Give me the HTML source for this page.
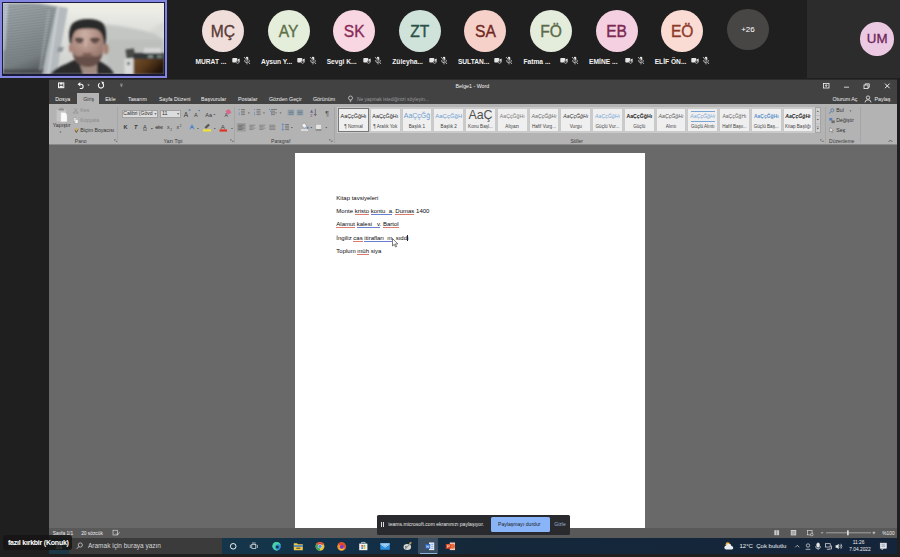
<!DOCTYPE html>
<html lang="tr"><head><meta charset="utf-8"><title>Toplantı</title>
<style>
*{margin:0;padding:0;box-sizing:border-box}
html,body{width:900px;height:557px;overflow:hidden;background:#201f1f;font-family:"Liberation Sans",sans-serif}
.a{position:absolute}
.t{position:absolute;white-space:nowrap;line-height:1}
.av{position:absolute;width:42px;height:42px;border-radius:50%;top:10.3px;text-align:center;font-size:15.6px;line-height:44.6px;-webkit-text-stroke:0.35px currentColor}
.lb{position:absolute;top:56.6px;height:9px;white-space:nowrap;color:#f2f2f2;font-size:6.65px;font-weight:bold;line-height:9px}
.ic{position:absolute;top:56.2px;width:8px;height:9px}
#ws{position:absolute;left:49px;top:79px;width:848.3px;height:474.6px;background:#696969;overflow:hidden}
.tab{position:absolute;top:16.5px;color:#f0f0f0;font-size:5.3px;line-height:7px;white-space:nowrap}
.rl{position:absolute;top:58.6px;color:#3a3a3a;font-size:5px;line-height:6px;white-space:nowrap;transform:translateX(-50%)}
.sty{position:absolute;top:30px;width:28.7px;height:21.5px;background:#efefef}
.sty span{position:absolute;left:-5.65px;width:40px;text-align:center;white-space:nowrap}
.sty .p{top:6px;font-size:5.4px;line-height:8px;color:#222}
.sty .n{top:15.2px;font-size:4.6px;line-height:6px;color:#444}
.dl{position:absolute;left:287px;font-size:6px;line-height:8px;color:#0a0a0a;white-space:nowrap}
.dl u{text-decoration:none;border-bottom:0.5px solid #dc7a70}
.dl u.b{border-bottom:0.5px solid #6a7fd0}
</style></head><body>
<div class="a" style="left:807px;top:0;width:93px;height:78px;background:#2d2c2c"></div>
<div class="a" style="left:860.4px;top:22.2px;width:33.6px;height:33.6px;border-radius:50%;background:#ecc9e3;color:#6a2458;font-size:13.3px;line-height:34.6px;text-align:center;-webkit-text-stroke:0.3px #6a2458">UM</div>
<div class="av" style="left:202.0px;background:#f0dedb;color:#5a3a36">MÇ</div>
<div class="lb" style="left:195.5px">MURAT ...</div><svg class="ic" style="left:231.7px" viewBox="0 0 8 9"><rect x="0.3" y="2" width="5" height="4.6" rx="0.8" fill="#e6e6e6"/><path d="M5.6 3.6 L7.6 2.4 V6.4 L5.6 5.2Z" fill="#e6e6e6"/><circle cx="5.6" cy="6.2" r="1.7" fill="#201f1f"/><circle cx="5.6" cy="6.2" r="1.2" fill="none" stroke="#e6e6e6" stroke-width="0.6"/></svg><svg class="ic" style="left:243.0px" viewBox="0 0 8 9"><rect x="2.7" y="0.8" width="2.6" height="4.6" rx="1.3" fill="#e6e6e6"/><path d="M1.5 4.2 a2.5 2.5 0 0 0 5 0 M4 6.8 V8.4" stroke="#e6e6e6" stroke-width="0.7" fill="none"/><path d="M0.8 0.8 L7.2 8.2" stroke="#201f1f" stroke-width="1.6"/><path d="M1 1 L7 8" stroke="#e6e6e6" stroke-width="0.7"/></svg>
<div class="av" style="left:267.6px;background:#e4eedb;color:#5c7046">AY</div>
<div class="lb" style="left:261.1px">Aysun Y...</div><svg class="ic" style="left:297.3px" viewBox="0 0 8 9"><rect x="0.3" y="2" width="5" height="4.6" rx="0.8" fill="#e6e6e6"/><path d="M5.6 3.6 L7.6 2.4 V6.4 L5.6 5.2Z" fill="#e6e6e6"/><circle cx="5.6" cy="6.2" r="1.7" fill="#201f1f"/><circle cx="5.6" cy="6.2" r="1.2" fill="none" stroke="#e6e6e6" stroke-width="0.6"/></svg><svg class="ic" style="left:308.6px" viewBox="0 0 8 9"><rect x="2.7" y="0.8" width="2.6" height="4.6" rx="1.3" fill="#e6e6e6"/><path d="M1.5 4.2 a2.5 2.5 0 0 0 5 0 M4 6.8 V8.4" stroke="#e6e6e6" stroke-width="0.7" fill="none"/><path d="M0.8 0.8 L7.2 8.2" stroke="#201f1f" stroke-width="1.6"/><path d="M1 1 L7 8" stroke="#e6e6e6" stroke-width="0.7"/></svg>
<div class="av" style="left:333.2px;background:#f8d6e2;color:#8a2c58">SK</div>
<div class="lb" style="left:326.7px">Sevgi K...</div><svg class="ic" style="left:362.9px" viewBox="0 0 8 9"><rect x="0.3" y="2" width="5" height="4.6" rx="0.8" fill="#e6e6e6"/><path d="M5.6 3.6 L7.6 2.4 V6.4 L5.6 5.2Z" fill="#e6e6e6"/><circle cx="5.6" cy="6.2" r="1.7" fill="#201f1f"/><circle cx="5.6" cy="6.2" r="1.2" fill="none" stroke="#e6e6e6" stroke-width="0.6"/></svg><svg class="ic" style="left:374.2px" viewBox="0 0 8 9"><rect x="2.7" y="0.8" width="2.6" height="4.6" rx="1.3" fill="#e6e6e6"/><path d="M1.5 4.2 a2.5 2.5 0 0 0 5 0 M4 6.8 V8.4" stroke="#e6e6e6" stroke-width="0.7" fill="none"/><path d="M0.8 0.8 L7.2 8.2" stroke="#201f1f" stroke-width="1.6"/><path d="M1 1 L7 8" stroke="#e6e6e6" stroke-width="0.7"/></svg>
<div class="av" style="left:398.8px;background:#cfe3db;color:#2b5146">ZT</div>
<div class="lb" style="left:392.3px">Züleyha...</div><svg class="ic" style="left:428.5px" viewBox="0 0 8 9"><rect x="0.3" y="2" width="5" height="4.6" rx="0.8" fill="#e6e6e6"/><path d="M5.6 3.6 L7.6 2.4 V6.4 L5.6 5.2Z" fill="#e6e6e6"/><circle cx="5.6" cy="6.2" r="1.7" fill="#201f1f"/><circle cx="5.6" cy="6.2" r="1.2" fill="none" stroke="#e6e6e6" stroke-width="0.6"/></svg><svg class="ic" style="left:439.8px" viewBox="0 0 8 9"><rect x="2.7" y="0.8" width="2.6" height="4.6" rx="1.3" fill="#e6e6e6"/><path d="M1.5 4.2 a2.5 2.5 0 0 0 5 0 M4 6.8 V8.4" stroke="#e6e6e6" stroke-width="0.7" fill="none"/><path d="M0.8 0.8 L7.2 8.2" stroke="#201f1f" stroke-width="1.6"/><path d="M1 1 L7 8" stroke="#e6e6e6" stroke-width="0.7"/></svg>
<div class="av" style="left:464.4px;background:#f6d1c9;color:#70281f">SA</div>
<div class="lb" style="left:457.9px">SULTAN...</div><svg class="ic" style="left:494.1px" viewBox="0 0 8 9"><rect x="0.3" y="2" width="5" height="4.6" rx="0.8" fill="#e6e6e6"/><path d="M5.6 3.6 L7.6 2.4 V6.4 L5.6 5.2Z" fill="#e6e6e6"/><circle cx="5.6" cy="6.2" r="1.7" fill="#201f1f"/><circle cx="5.6" cy="6.2" r="1.2" fill="none" stroke="#e6e6e6" stroke-width="0.6"/></svg><svg class="ic" style="left:505.4px" viewBox="0 0 8 9"><rect x="2.7" y="0.8" width="2.6" height="4.6" rx="1.3" fill="#e6e6e6"/><path d="M1.5 4.2 a2.5 2.5 0 0 0 5 0 M4 6.8 V8.4" stroke="#e6e6e6" stroke-width="0.7" fill="none"/><path d="M0.8 0.8 L7.2 8.2" stroke="#201f1f" stroke-width="1.6"/><path d="M1 1 L7 8" stroke="#e6e6e6" stroke-width="0.7"/></svg>
<div class="av" style="left:530.0px;background:#e4ecdc;color:#5b6b48">FÖ</div>
<div class="lb" style="left:523.5px">Fatma ...</div><svg class="ic" style="left:559.7px" viewBox="0 0 8 9"><rect x="0.3" y="2" width="5" height="4.6" rx="0.8" fill="#e6e6e6"/><path d="M5.6 3.6 L7.6 2.4 V6.4 L5.6 5.2Z" fill="#e6e6e6"/><circle cx="5.6" cy="6.2" r="1.7" fill="#201f1f"/><circle cx="5.6" cy="6.2" r="1.2" fill="none" stroke="#e6e6e6" stroke-width="0.6"/></svg><svg class="ic" style="left:571.0px" viewBox="0 0 8 9"><rect x="2.7" y="0.8" width="2.6" height="4.6" rx="1.3" fill="#e6e6e6"/><path d="M1.5 4.2 a2.5 2.5 0 0 0 5 0 M4 6.8 V8.4" stroke="#e6e6e6" stroke-width="0.7" fill="none"/><path d="M0.8 0.8 L7.2 8.2" stroke="#201f1f" stroke-width="1.6"/><path d="M1 1 L7 8" stroke="#e6e6e6" stroke-width="0.7"/></svg>
<div class="av" style="left:595.6px;background:#f4d0e0;color:#7c2850">EB</div>
<div class="lb" style="left:589.1px">EMİNE ...</div><svg class="ic" style="left:625.3px" viewBox="0 0 8 9"><rect x="0.3" y="2" width="5" height="4.6" rx="0.8" fill="#e6e6e6"/><path d="M5.6 3.6 L7.6 2.4 V6.4 L5.6 5.2Z" fill="#e6e6e6"/><circle cx="5.6" cy="6.2" r="1.7" fill="#201f1f"/><circle cx="5.6" cy="6.2" r="1.2" fill="none" stroke="#e6e6e6" stroke-width="0.6"/></svg><svg class="ic" style="left:636.6px" viewBox="0 0 8 9"><rect x="2.7" y="0.8" width="2.6" height="4.6" rx="1.3" fill="#e6e6e6"/><path d="M1.5 4.2 a2.5 2.5 0 0 0 5 0 M4 6.8 V8.4" stroke="#e6e6e6" stroke-width="0.7" fill="none"/><path d="M0.8 0.8 L7.2 8.2" stroke="#201f1f" stroke-width="1.6"/><path d="M1 1 L7 8" stroke="#e6e6e6" stroke-width="0.7"/></svg>
<div class="av" style="left:661.2px;background:#fadcd4;color:#8c3a2a">EÖ</div>
<div class="lb" style="left:654.7px">ELİF ÖN...</div><svg class="ic" style="left:690.9px" viewBox="0 0 8 9"><rect x="0.3" y="2" width="5" height="4.6" rx="0.8" fill="#e6e6e6"/><path d="M5.6 3.6 L7.6 2.4 V6.4 L5.6 5.2Z" fill="#e6e6e6"/><circle cx="5.6" cy="6.2" r="1.7" fill="#201f1f"/><circle cx="5.6" cy="6.2" r="1.2" fill="none" stroke="#e6e6e6" stroke-width="0.6"/></svg><svg class="ic" style="left:702.2px" viewBox="0 0 8 9"><rect x="2.7" y="0.8" width="2.6" height="4.6" rx="1.3" fill="#e6e6e6"/><path d="M1.5 4.2 a2.5 2.5 0 0 0 5 0 M4 6.8 V8.4" stroke="#e6e6e6" stroke-width="0.7" fill="none"/><path d="M0.8 0.8 L7.2 8.2" stroke="#201f1f" stroke-width="1.6"/><path d="M1 1 L7 8" stroke="#e6e6e6" stroke-width="0.7"/></svg>
<div class="av" style="left:727.2px;top:8.7px;width:41.6px;height:41.6px;background:#484644;color:#fff;font-size:8px;line-height:41px;-webkit-text-stroke:0">+26</div>
<div class="a" style="left:0;top:0;width:167.2px;height:77.6px;background:#8286e0"></div>
<div class="a" style="left:2px;top:2px;width:163px;height:73.5px;background:#1b1a3c"></div>
<svg class="a" style="left:3px;top:3px" width="161" height="70.5" viewBox="3 3 161 70.5">
<defs>
<filter id="bl" x="-10%" y="-10%" width="120%" height="120%"><feGaussianBlur stdDeviation="0.8"/></filter>
<filter id="bl2" x="-10%" y="-10%" width="120%" height="120%"><feGaussianBlur stdDeviation="1.6"/></filter>
<linearGradient id="wall" x1="0" y1="0" x2="0" y2="1"><stop offset="0" stop-color="#efeee2"/><stop offset="0.12" stop-color="#ecece6"/><stop offset="0.3" stop-color="#e2e3df"/><stop offset="1" stop-color="#cfd1cd"/></linearGradient>
<linearGradient id="bld" x1="0" y1="0" x2="0.3" y2="1"><stop offset="0" stop-color="#9ea6aa"/><stop offset="0.45" stop-color="#8b9397"/><stop offset="0.85" stop-color="#788084"/><stop offset="1" stop-color="#5d6366"/></linearGradient>
<radialGradient id="skin" cx="0.42" cy="0.25" r="0.8"><stop offset="0" stop-color="#ccb0a5"/><stop offset="0.45" stop-color="#b39186"/><stop offset="1" stop-color="#8a6a60"/></radialGradient>
<pattern id="slat" width="4" height="1.6" patternUnits="userSpaceOnUse" patternTransform="rotate(4)"><rect width="4" height="0.6" fill="#5f676b" opacity="0.45"/></pattern>
<linearGradient id="cab" x1="0" y1="0" x2="1" y2="0.6"><stop offset="0" stop-color="#74502b"/><stop offset="0.5" stop-color="#5a3a1c"/><stop offset="1" stop-color="#1e1208"/></linearGradient>
</defs>
<rect x="3" y="3" width="161" height="70.5" fill="url(#wall)"/>
<g filter="url(#bl2)">
<path d="M100 24 Q130 26 164 36 V74 H100Z" fill="#c3c6c3"/>
<path d="M150 30 L164 22 V40Z" fill="#d6d8d4"/>
<path d="M108 40 H164 V74 H108Z" fill="#bcbfbc"/>
</g>
<g filter="url(#bl)">
<!-- window frame + blinds -->
<path d="M3 3 H40 L68 8 L61 46 L57 74 H3Z" fill="#b4babd"/><path d="M57.5 7 L59 7.3 L49 74 L47.5 74Z" fill="#d5dadc"/>
<path d="M3 3 H33 L57 7 L47 50 L42 74 H3Z" fill="url(#bld)"/>
<path d="M5 4 L8 4 L5 50 L4 50Z" fill="#c9d4e6" opacity="0.8"/>
<path d="M58 47 L64 47 L62 52 L57 52Z" fill="#8e9497"/>
<path d="M3 69 H44 L43 74 H3Z" fill="#3d4143" opacity="0.6"/><path d="M48 10 L50 10.300 L41 70 L39.500 70Z" fill="#aab2b6" opacity="0.8"/>
<!-- cabinet -->
<rect x="124.5" y="59" width="9.5" height="15" fill="#d9dbd8"/>
<rect x="126" y="49" width="8.5" height="9" fill="#474c46" transform="rotate(-8 130 53)"/>
<rect x="133.5" y="56.5" width="31" height="18" fill="url(#cab)"/>
<rect x="133.5" y="53" width="31" height="6" fill="#34383a"/>
<rect x="144" y="48" width="17" height="5" fill="#d6d6d6"/>
<rect x="148" y="55" width="5" height="3" fill="#7d8a86"/>
<rect x="157" y="55" width="5" height="3" fill="#6d7a76"/>
<rect x="127" y="62" width="3" height="3" fill="#6a6d6a"/>
<!-- man -->
<path d="M50 74 Q55 68 66 64 L74 60 L98 60 L106 65 Q112 69 114 74Z" fill="#2a2c2a"/>
<path d="M79 62 H97 V74 H83Z" fill="#a08a80"/>
<ellipse cx="106" cy="49" rx="2.6" ry="5.5" fill="#a57d70"/>
<ellipse cx="70.5" cy="48" rx="1.6" ry="4.5" fill="#a88274"/>
<path d="M71 34 Q71 24 88 24 Q104 24 104 36 L103 52 Q101 62 95 65 Q88 68 81 65 Q74 61 72 52Z" fill="url(#skin)"/>
<path d="M72.5 53 Q75 57 80 56.5 Q87 54 95 56.5 Q100 57 102.800 52 Q101 62 95 65.500 Q88 68.500 81 65.500 Q74 62 72.500 53Z" fill="#66504a"/>
<path d="M81 55.500 Q87 53.600 94 55.500 L93 57.200 Q87 56 82 57.200Z" fill="#7a5f57"/>
<path d="M69.800 43 Q67.500 30 72 24 Q77 19 88 19 Q99 19 103.500 24 Q107.500 30 105.500 44 L103.800 45 Q104 33 97 29.500 Q87 27.500 77.500 29.800 Q72 32 71.800 44Z" fill="#2a2b2b"/>
<path d="M75 38.600 Q79 37 83.500 38.800 L83.500 40.800 Q79 39.600 75 40.800Z" fill="#3a2e2c"/>
<path d="M90 38.800 Q95 37 99.500 38.600 L99.500 40.800 Q95 39.600 90 40.800Z" fill="#3a2e2c"/>
<ellipse cx="79.500" cy="42" rx="3.200" ry="1.300" fill="#54413c"/>
<ellipse cx="94.800" cy="42" rx="3.200" ry="1.300" fill="#54413c"/>
<path d="M86 40 L85.500 47.500" stroke="#d4b9ae" stroke-width="1.800" fill="none" opacity="0.8"/><path d="M83 53.300 Q87 54.300 91.500 53.300" stroke="#6e4d45" stroke-width="1.200" fill="none"/>
</g>
<path d="M6 5 H33 L55 8.500 L46 50 L42 68 H6Z" fill="url(#slat)" opacity="0.55"/>
</svg>
<div id="ws">
<div class="a" style="left:0;top:0;width:849px;height:25px;background:#424243"></div><div class="a" style="left:0;top:0;width:849px;height:0.6px;background:#2c2c2c"></div>
<svg class="a" style="left:0;top:0" width="120" height="14" viewBox="0 0 120 14">
<g fill="none" stroke="#f4f4f4" stroke-width="1">
<rect x="9.500" y="3.900" width="5.300" height="4.800"/><rect x="10.800" y="3.900" width="2.700" height="1.700" fill="#f4f4f4" stroke="none"/><rect x="10.600" y="6.800" width="3.100" height="1.900" fill="#f4f4f4" stroke="none"/>
<path d="M29.500 5.300 H32 A2.100 2.100 0 0 1 32 9.500 H30.800" stroke-width="1.100"/><path d="M31.300 3 L28.600 5.300 L31.300 7.600Z" fill="#f4f4f4" stroke="none"/>
<path d="M53.300 4.300 A2.600 2.600 0 1 1 50.700 4.300" stroke-width="1.100"/><path d="M52 2.600 L54.900 2.900 L54.300 5.800Z" fill="#f4f4f4" stroke="none"/>
</g>
<path d="M38.300 5.600 h2.400 l-1.200 1.400z" fill="#ccc"/>
<path d="M71.200 6.400 h2.400 l-1.200 1.400z" fill="#ddd"/><rect x="71.200" y="4.800" width="2.400" height="0.600" fill="#ddd"/>
</svg>
<div class="t" style="left:406.5px;top:4.6px;color:#f2f2f2;font-size:5.3px">Belge1 - Word</div>
<svg class="a" style="left:771.0px;top:0" width="77" height="14" viewBox="820 79 77 14">
<g fill="none" stroke="#f2f2f2" stroke-width="0.8">
<rect x="823.500" y="83.500" width="5.500" height="4.500"/><path d="M826.200 87 V84.800 M825.200 85.800 L826.200 84.700 L827.200 85.800"/>
<path d="M844 87.200 H849"/>
<rect x="864" y="85" width="4" height="3.600"/><path d="M865.300 85 V83.800 H869.300 V87.300 H868"/>
<path d="M885 83.600 L889.600 88.200 M889.600 83.600 L885 88.200" stroke-width="1"/>
</g></svg>
<div class="a" style="left:28.3px;top:14.0px;width:22px;height:12px;background:#b3b3b3"></div>
<div class="tab" style="left:6.3px;color:#f4f4f4">Dosya</div>
<div class="tab" style="left:34.2px;color:#3a3a3a">Giriş</div>
<div class="tab" style="left:56.3px;color:#f0f0f0">Ekle</div>
<div class="tab" style="left:79.0px;color:#f0f0f0">Tasarım</div>
<div class="tab" style="left:110.0px;color:#f0f0f0">Sayfa Düzeni</div>
<div class="tab" style="left:152.0px;color:#f0f0f0">Başvurular</div>
<div class="tab" style="left:189.0px;color:#f0f0f0">Postalar</div>
<div class="tab" style="left:220.0px;color:#f0f0f0">Gözden Geçir</div>
<div class="tab" style="left:264.0px;color:#f0f0f0">Görünüm</div>
<div class="tab" style="left:308.0px;color:#9a9a9a;font-size:4.900px">Ne yapmak istediğinizi söyleyin...</div>
<svg class="a" style="left:298.0px;top:15.5px" width="7" height="8" viewBox="0 0 7 8"><circle cx="3.500" cy="3" r="2" fill="none" stroke="#ddd" stroke-width="0.700"/><path d="M2.700 5.600 H4.300 M2.900 6.700 H4.100" stroke="#ddd" stroke-width="0.700"/></svg>
<div class="tab" style="left:783.5px;color:#f0f0f0">Oturum Aç</div>
<div class="tab" style="left:825.5px;color:#f0f0f0">Paylaş</div>
<svg class="a" style="left:815.0px;top:15.5px" width="8" height="8" viewBox="0 0 8 8"><circle cx="4" cy="2.600" r="1.700" fill="none" stroke="#f0f0f0" stroke-width="0.800"/><path d="M1 7.500 Q1 4.800 4 4.800 Q7 4.800 7 7.500" fill="none" stroke="#f0f0f0" stroke-width="0.800"/></svg>
<div class="a" style="left:0;top:25.0px;width:848px;height:40.300px;background:#b3b3b3"></div>
<div class="a" style="left:0;top:65.3px;width:848px;height:0.8px;background:#8a8a8a"></div>
<div class="a" style="left:68.3px;top:28.0px;width:0.6px;height:36px;background:#a6a6a6"></div>
<div class="a" style="left:185.0px;top:28.0px;width:0.6px;height:36px;background:#a6a6a6"></div>
<div class="a" style="left:284.5px;top:28.0px;width:0.6px;height:36px;background:#a6a6a6"></div>
<div class="a" style="left:776.0px;top:28.0px;width:0.6px;height:36px;background:#a6a6a6"></div>
<div class="a" style="left:811.3px;top:28.0px;width:0.6px;height:36px;background:#a6a6a6"></div>
<div class="rl" style="left:31.7px">Pano</div>
<div class="rl" style="left:124.0px">Yazı Tipi</div>
<div class="rl" style="left:231.7px">Paragraf</div>
<div class="rl" style="left:527.7px">Stiller</div>
<div class="rl" style="left:792.7px">Düzenleme</div>
<svg class="a" style="left:64.5px;top:59.7px" width="3.5" height="3.5" viewBox="0 0 3.500 3.500"><path d="M0.300 0.300 H1.800 M0.300 0.300 V1.800 M3.200 1.400 V3.200 H1.400 M1.600 1.600 L3 3" stroke="#555" stroke-width="0.500" fill="none"/></svg>
<svg class="a" style="left:181.1px;top:59.7px" width="3.5" height="3.5" viewBox="0 0 3.500 3.500"><path d="M0.300 0.300 H1.800 M0.300 0.300 V1.800 M3.200 1.400 V3.200 H1.400 M1.600 1.600 L3 3" stroke="#555" stroke-width="0.500" fill="none"/></svg>
<svg class="a" style="left:280.3px;top:59.7px" width="3.5" height="3.5" viewBox="0 0 3.500 3.500"><path d="M0.300 0.300 H1.800 M0.300 0.300 V1.800 M3.200 1.400 V3.200 H1.400 M1.600 1.600 L3 3" stroke="#555" stroke-width="0.500" fill="none"/></svg>
<svg class="a" style="left:771.1px;top:59.7px" width="3.5" height="3.5" viewBox="0 0 3.500 3.500"><path d="M0.300 0.300 H1.800 M0.300 0.300 V1.800 M3.200 1.400 V3.200 H1.400 M1.600 1.600 L3 3" stroke="#555" stroke-width="0.500" fill="none"/></svg>
<svg class="a" style="left:838.5px;top:60.0px" width="5" height="4" viewBox="0 0 5 4"><path d="M0.600 3 L2.500 1 L4.400 3" stroke="#444" stroke-width="0.700" fill="none"/></svg>
<svg class="a" style="left:4.0px;top:26.0px" width="64" height="34" viewBox="53 105 64 34">
<rect x="56.600" y="109.600" width="9.500" height="11.800" rx="0.600" fill="#c4c4c4"/><path d="M58.500 108.800 h5.500 v1.600 h-5.500z" fill="#8d8d8d"/><rect x="59.800" y="107.800" width="2.800" height="1.400" fill="#9a9a9a"/>
<path d="M60.800 112.500 h4.200 l2 2 v7.300 h-6.200z" fill="#fafafa" stroke="#d0d0d0" stroke-width="0.400"/>
<path d="M59.300 131.600 h2.200 l-1.100 1.300z" fill="#666"/>
<path d="M74 108.300 L77.300 112.300 M77.300 108.300 L74 112.300" stroke="#8c8c8c" stroke-width="0.700"/><circle cx="74.200" cy="112.700" r="0.900" fill="none" stroke="#8c8c8c" stroke-width="0.500"/><circle cx="77.100" cy="112.700" r="0.900" fill="none" stroke="#8c8c8c" stroke-width="0.500"/>
<rect x="73.500" y="118" width="3" height="3.800" fill="#e8e8e8" stroke="#999" stroke-width="0.400"/><rect x="75" y="119.400" width="3" height="3.800" fill="#f4f4f4" stroke="#999" stroke-width="0.400"/>
<path d="M74.700 129 L76.300 131.700 L78.500 128.600 L77.800 131 L76.300 133 L75 131z" fill="#6a4a1c"/><path d="M75 128.600 l3 0 l-0.500 1.300 l-2 0z" fill="#d9a63a"/>
</svg>
<div class="t" style="left:3.7px;top:43.8px;color:#333;font-size:5.300px">Yapıştır</div>
<div class="t" style="left:31.3px;top:29.0px;color:#8a8a8a;font-size:5.200px">Kes</div>
<div class="t" style="left:31.3px;top:39.3px;color:#8a8a8a;font-size:5.200px">Kopyala</div>
<div class="t" style="left:31.3px;top:49.3px;color:#333;font-size:5.200px">Biçim Boyacısı</div>
<div class="a" style="left:72.8px;top:31.0px;width:36.500px;height:8px;background:#dcdcdc;border:0.5px solid #a0a0a0"></div>
<div class="a" style="left:111.3px;top:31.0px;width:20.500px;height:8px;background:#dcdcdc;border:0.5px solid #a0a0a0"></div>
<div class="t" style="left:74.3px;top:32.4px;color:#2a2a2a;font-size:5px">Calibri (Gövd</div>
<div class="t" style="left:113.0px;top:32.4px;color:#2a2a2a;font-size:5.300px">11</div>
<svg class="a" style="left:70.0px;top:26.0px" width="116" height="34" viewBox="119 105 116 34">
<path d="M154.300 113.300 h2.400 l-1.200 1.400z M177 113.300 h2.400 l-1.200 1.400z" fill="#555"/>
<g font-family="Liberation Sans, sans-serif" fill="#3a3a3a">
<text x="183.700" y="117" font-size="6.500">A</text><text x="194" y="117" font-size="5.500">A</text>
<text x="205.300" y="116.500" font-size="5.500">Aa</text>
<g transform="translate(0,-2.2)"><text x="123.600" y="131.700" font-size="5.600" font-weight="bold">K</text><text x="134" y="131.700" font-size="5.600" font-style="italic" font-weight="bold">T</text><text x="143" y="131.200" font-size="5.600">A</text>
<text x="155.500" y="131" font-size="4.600" fill="#444">abc</text><text x="167" y="131.500" font-size="5.200">x</text><text x="176.500" y="131.500" font-size="5.200">x</text>
<text x="170.300" y="133" font-size="3">2</text><text x="179.800" y="129.400" font-size="3">2</text></g>
</g>
<g transform="translate(0,-2.2)"><path d="M143 132.300 h4" stroke="#3a3a3a" stroke-width="0.600"/><path d="M155 129.600 h8" stroke="#444" stroke-width="0.500"/><path d="M150.800 130.300 h2.200 l-1.100 1.300z" fill="#555"/></g>
<path d="M188.200 110.500 l1.400 -1.500 l1.400 1.500z M198 110 l1.200 1.300 l1.200 -1.300z" fill="#3f6fb5"/>
<path d="M213.300 114 h2.200 l-1.100 1.300z" fill="#555"/>
<path d="M225.500 111 l3.500 -2 l2.500 3.500 l-3.500 2.300z" fill="#d9688c"/><text x="224.500" y="116.500" font-size="5" font-family="Liberation Sans, sans-serif" fill="#444">A</text>
<g transform="translate(0,-2.2)">
<text x="189.800" y="131.500" font-size="6.200" font-family="Liberation Sans, sans-serif" fill="#dfe8f5" stroke="#4a7fc8" stroke-width="0.500">A</text>
<path d="M197 130.300 h2 l-1 1.200z M213.800 130.300 h2 l-1 1.200z M231 130.300 h2 l-1 1.200z" fill="#555"/>
<path d="M204.500 129.500 l3.800 -3.500 l1.600 1.500 l-3.800 3.500z" fill="#555"/><rect x="203" y="131.500" width="8" height="2.200" fill="#f2e233"/>
<text x="220.800" y="131" font-size="6.200" font-family="Liberation Sans, sans-serif" fill="#444">A</text><rect x="219.500" y="131.600" width="7.500" height="2.200" fill="#e03323"/></g>
</svg>
<svg class="a" style="left:186.0px;top:26.0px" width="99" height="34" viewBox="235 105 99 34"><path d="M241 109.5 h4" stroke="#5a5a5a" stroke-width="0.6"/><path d="M241 111.2 h4" stroke="#5a5a5a" stroke-width="0.6"/><path d="M241 112.9 h4" stroke="#5a5a5a" stroke-width="0.6"/><path d="M241 114.6 h4" stroke="#5a5a5a" stroke-width="0.6"/><path d="M238.700 109.500 h1 M238.700 112.900 h1 M238.700 114.600 h1" stroke="#4a7fc8" stroke-width="0.800"/><path d="M256.5 109.5 h4" stroke="#5a5a5a" stroke-width="0.6"/><path d="M256.5 111.2 h4" stroke="#5a5a5a" stroke-width="0.6"/><path d="M256.5 112.9 h4" stroke="#5a5a5a" stroke-width="0.6"/><path d="M256.5 114.6 h4" stroke="#5a5a5a" stroke-width="0.6"/><path d="M254 109.500 h1 M254 112.900 h1 M254 114.600 h1" stroke="#4a7fc8" stroke-width="0.800"/><path d="M271 109.5 h6" stroke="#5a5a5a" stroke-width="0.6"/><path d="M271 111.2 h4" stroke="#5a5a5a" stroke-width="0.6"/><path d="M271 112.9 h6" stroke="#5a5a5a" stroke-width="0.6"/><path d="M271 114.6 h4" stroke="#5a5a5a" stroke-width="0.6"/><path d="M269 109.500 h1 M270 111.200 h1 M271 112.900 h1" stroke="#4a7fc8" stroke-width="0.800"/><path d="M247.800 112.500 h2 l-1 1.200z M263 112.500 h2 l-1 1.200z M279.500 112.500 h2 l-1 1.200z" fill="#555"/><rect x="287.500" y="109.500" width="7" height="6" fill="#98a7b3"/><path d="M288.5 111.0 h5" stroke="#5a6872" stroke-width="0.6"/><path d="M288.5 112.6 h5" stroke="#5a6872" stroke-width="0.6"/><path d="M288.5 114.2 h5" stroke="#5a6872" stroke-width="0.6"/><rect x="296.500" y="109.500" width="7" height="6" fill="#98a7b3"/><path d="M297.5 111.0 h5" stroke="#5a6872" stroke-width="0.6"/><path d="M297.5 112.6 h5" stroke="#5a6872" stroke-width="0.6"/><path d="M297.5 114.2 h5" stroke="#5a6872" stroke-width="0.6"/><g font-family="Liberation Sans, sans-serif" fill="#4a4a8a"><text x="310.300" y="112.500" font-size="3.800">A</text><text x="310.300" y="116.800" font-size="3.800" fill="#8a3a6a">Z</text></g><path d="M315.300 109 v6.500 m-1.200 -1.500 l1.200 1.600 l1.200 -1.600" stroke="#444" stroke-width="0.600" fill="none"/><text x="325.300" y="116" font-size="7" font-family="Liberation Sans, sans-serif" fill="#4a4a4a">¶</text><g transform="translate(0,-3)"><rect x="236.800" y="126" width="9" height="8.500" fill="#9c9c9c"/><path d="M238.3 128.2 h6" stroke="#555" stroke-width="0.6"/><path d="M238.3 129.64999999999998 h4" stroke="#555" stroke-width="0.6"/><path d="M238.3 131.1 h6" stroke="#555" stroke-width="0.6"/><path d="M238.3 132.54999999999998 h4" stroke="#555" stroke-width="0.6"/><path d="M249.3 128.2 h6" stroke="#6a6a6a" stroke-width="0.6"/><path d="M249.3 129.64999999999998 h4" stroke="#6a6a6a" stroke-width="0.6"/><path d="M249.3 131.1 h6" stroke="#6a6a6a" stroke-width="0.6"/><path d="M249.3 132.54999999999998 h4" stroke="#6a6a6a" stroke-width="0.6"/><path d="M259.3 128.2 h6" stroke="#6a6a6a" stroke-width="0.6"/><path d="M259.3 129.64999999999998 h4" stroke="#6a6a6a" stroke-width="0.6"/><path d="M259.3 131.1 h6" stroke="#6a6a6a" stroke-width="0.6"/><path d="M259.3 132.54999999999998 h4" stroke="#6a6a6a" stroke-width="0.6"/><path d="M269.3 128.2 h6" stroke="#6a6a6a" stroke-width="0.6"/><path d="M269.3 129.64999999999998 h6" stroke="#6a6a6a" stroke-width="0.6"/><path d="M269.3 131.1 h6" stroke="#6a6a6a" stroke-width="0.6"/><path d="M269.3 132.54999999999998 h6" stroke="#6a6a6a" stroke-width="0.6"/><path d="M285 127.5 h4" stroke="#555" stroke-width="0.6"/><path d="M285 129.2 h4" stroke="#555" stroke-width="0.6"/><path d="M285 130.9 h4" stroke="#555" stroke-width="0.6"/><path d="M285 132.6 h4" stroke="#555" stroke-width="0.6"/><path d="M282.800 126.800 v6.500 m-1 -5.300 l1 -1.300 l1 1.300 m-2 4 l1 1.300 l1 -1.300" stroke="#4a7fc8" stroke-width="0.600" fill="none"/><path d="M290.800 130 h2 l-1 1.200z" fill="#555"/><path d="M301.500 128 l2.800 -2 l2.600 3 l-2.800 2.300z" fill="#f2f2f2" stroke="#777" stroke-width="0.400"/><ellipse cx="307.800" cy="130.800" rx="0.800" ry="1.200" fill="#4a7fc8"/><rect x="301" y="132.300" width="7" height="1.500" fill="#e8e8e8"/><path d="M310.300 130 h2 l-1 1.200z" fill="#555"/><rect x="315.800" y="127.300" width="5.600" height="5.600" fill="#e4e4e4" stroke="#999" stroke-width="0.400"/><path d="M315.800 132.900 h5.600" stroke="#444" stroke-width="0.700"/><path d="M325.300 130 h2 l-1 1.200z" fill="#555"/></g></svg>
<div class="a" style="left:288.0px;top:28.0px;width:478.5px;height:25.5px;background:#cacaca"></div>
<div class="sty" style="left:290.1px;outline:0.8px solid #777;outline-offset:0.7px;"><span class="p" style="color:#222;font-size:5.4px;font-style:normal;font-weight:normal;top:3px;line-height:8px">AaÇçĞğHı</span><span class="n">¶ Normal</span></div>
<div class="sty" style="left:321.9px;"><span class="p" style="color:#222;font-size:5.4px;font-style:normal;font-weight:normal;top:3px;line-height:8px">AaÇçĞğHı</span><span class="n">¶ Aralık Yok</span></div>
<div class="sty" style="left:353.6px;"><span class="p" style="color:#6d9ccf;font-size:7px;font-style:normal;font-weight:normal;top:3px;line-height:8px">AaÇçĞğ</span><span class="n">Başlık 1</span></div>
<div class="sty" style="left:385.4px;"><span class="p" style="color:#6d9ccf;font-size:6px;font-style:normal;font-weight:normal;top:3px;line-height:8px">AaÇçĞğH</span><span class="n">Başlık 2</span></div>
<div class="sty" style="left:417.1px;"><span class="p" style="color:#505050;font-size:12.4px;font-style:normal;font-weight:normal;top:-0.5px;line-height:13px">AaÇ</span><span class="n">Konu Başl...</span></div>
<div class="sty" style="left:448.9px;"><span class="p" style="color:#7a7a7a;font-size:5.2px;font-style:normal;font-weight:normal;top:3px;line-height:8px">AaÇçĞğHı</span><span class="n">Altyazı</span></div>
<div class="sty" style="left:480.6px;"><span class="p" style="color:#666;font-size:5.2px;font-style:italic;font-weight:normal;top:3px;line-height:8px">AaÇçĞğHı</span><span class="n">Hafif Vurg...</span></div>
<div class="sty" style="left:512.4px;"><span class="p" style="color:#333;font-size:5.2px;font-style:italic;font-weight:normal;top:3px;line-height:8px">AaÇçĞğHı</span><span class="n">Vurgu</span></div>
<div class="sty" style="left:544.1px;"><span class="p" style="color:#7aa7d6;font-size:5.2px;font-style:italic;font-weight:normal;top:3px;line-height:8px">AaÇçĞğHı</span><span class="n">Güçlü Vur...</span></div>
<div class="sty" style="left:575.9px;"><span class="p" style="color:#222;font-size:5.2px;font-style:normal;font-weight:bold;top:3px;line-height:8px">AaÇçĞğHı</span><span class="n">Güçlü</span></div>
<div class="sty" style="left:607.6px;"><span class="p" style="color:#555;font-size:5.2px;font-style:italic;font-weight:normal;top:3px;line-height:8px">AaÇçĞğHı</span><span class="n">Alıntı</span></div>
<div class="sty" style="left:639.4px;"><span class="p" style="color:#7aa7d6;font-size:5.2px;font-style:italic;font-weight:normal;top:3px;line-height:8px">AaÇçĞğHı</span><span class="n">Güçlü Alıntı</span></div>
<div class="sty" style="left:671.1px;"><span class="p" style="color:#666;font-size:5px;font-style:normal;font-weight:normal;top:3px;line-height:8px">AaÇçĞğHı</span><span class="n">Hafif Başv...</span></div>
<div class="sty" style="left:702.9px;"><span class="p" style="color:#5b8fcb;font-size:5px;font-style:normal;font-weight:bold;top:3px;line-height:8px">AaÇçĞğHı</span><span class="n">Güçlü Baş...</span></div>
<div class="sty" style="left:734.6px;"><span class="p" style="color:#222;font-size:5.1px;font-style:italic;font-weight:bold;top:3px;line-height:8px">AaÇçĞğHı</span><span class="n">Kitap Başlığı</span></div>
<div class="a" style="left:641.7px;top:31.6px;width:24px;height:0.5px;background:#7aa7d6"></div><div class="a" style="left:641.7px;top:42.4px;width:24px;height:0.5px;background:#7aa7d6"></div>
<div class="a" style="left:766.3px;top:28.0px;width:5.500px;height:25.500px;background:#cfcfcf;border:0.4px solid #a5a5a5"></div>
<svg class="a" style="left:766.3px;top:28.0px" width="5.5" height="25.5" viewBox="0 0 5.500 25.500"><path d="M1.700 5 h2.200 l-1.100 -1.300z M1.700 12 h2.200 l-1.100 1.300z M1.700 21 h2.200 l-1.100 1.300z" fill="#555"/><path d="M1.600 19.800 h2.400" stroke="#555" stroke-width="0.500"/><path d="M0 8.500 h5.500 M0 17 h5.500" stroke="#a5a5a5" stroke-width="0.400"/></svg>
<svg class="a" style="left:777.0px;top:27.0px" width="30" height="32" viewBox="826 105 30 32">
<circle cx="832.300" cy="109.300" r="1.600" fill="none" stroke="#4a6fa5" stroke-width="0.700"/><path d="M831 110.700 L829.300 112.500" stroke="#4a6fa5" stroke-width="0.900"/>
<path d="M849.500 109.500 h2 l-1 1.200z M843 129 h1.800 l-0.900 1.100z" fill="#555"/>
<rect x="829.300" y="117" width="3" height="2.600" fill="#5a7fb5"/><rect x="831.500" y="119.500" width="3.200" height="2.600" fill="#6a6a6a"/>
<path d="M830 126.500 l0 4.500 l1.200 -1 l0.900 1.800 l0.700 -0.400 l-0.900 -1.700 l1.500 -0.200z" fill="#f4f4f4" stroke="#555" stroke-width="0.400"/>
</svg>
<div class="t" style="left:787.3px;top:28.8px;color:#333;font-size:5.200px">Bul</div>
<div class="t" style="left:787.3px;top:39.2px;color:#333;font-size:5.200px">Değiştir</div>
<div class="t" style="left:787.3px;top:48.8px;color:#333;font-size:5.200px">Seç</div>
<div class="a" style="left:246.0px;top:73.5px;width:350px;height:376px;background:#fff"></div>
<div class="dl" style="left:287.3px;top:114.8px">Kitap tavsiyeleri</div>
<div class="dl" style="left:287.3px;top:128.1px">Monte <u>kristo</u> <u class="b">kontu&nbsp; a</u>. <u>Dumas</u> 1400</div>
<div class="dl" style="left:287.3px;top:141.4px"><u>Alamut</u> <u class="b">kalesi &nbsp; v</u>. <u>Bartol</u></div>
<div class="dl" style="left:287.3px;top:154.8px">İngiliz <u>cas</u> <u class="b">itirafları&nbsp; m</u>. sıddı</div>
<div class="dl" style="left:287.3px;top:168.1px">Toplum <u>müh</u> siya</div>
<div class="a" style="left:358.3px;top:155.6px;width:0.6px;height:6.400px;background:#222"></div>
<svg class="a" style="left:342.5px;top:158.5px" width="7" height="10" viewBox="0 0 7 10"><path d="M0.500 0.500 V8 L2.300 6.300 L3.500 9 L4.600 8.500 L3.400 5.900 H5.800Z" fill="#fff" stroke="#222" stroke-width="0.600"/></svg>
<div class="a" style="left:0;top:449.0px;width:849px;height:10px;background:#595959"></div>
<div class="t" style="left:3.8px;top:452.5px;color:#eee;font-size:4.800px">Sayfa 1/1</div>
<div class="t" style="left:32.2px;top:452.5px;color:#eee;font-size:4.800px">20 sözcük</div>
<div class="t" style="left:833.3px;top:452.5px;color:#eee;font-size:4.800px">%100</div>
<svg class="a" style="left:61.0px;top:449.0px" width="12" height="10" viewBox="110 528 12 10"><rect x="113" y="530.200" width="4.500" height="4.800" fill="none" stroke="#e8e8e8" stroke-width="0.600"/><path d="M116 533.500 l1.500 1.500 l2 -2.800" stroke="#e8e8e8" stroke-width="0.600" fill="none"/></svg>
<svg class="a" style="left:721.0px;top:449.0px" width="110" height="10" viewBox="770 528 110 10">
<rect x="774.300" y="530.200" width="4.800" height="5" fill="#c9c9c9"/><path d="M776.700 530.200 v5" stroke="#595959" stroke-width="0.500"/>
<rect x="790.800" y="530" width="5.400" height="5.400" fill="#d0d0d0"/><path d="M791.600 531.600 h3.800 M791.600 532.800 h3.800 M791.600 534 h3.800" stroke="#6a6a6a" stroke-width="0.500"/>
<g fill="none" stroke="#e4e4e4" stroke-width="0.600">
<rect x="807.500" y="530.300" width="4.600" height="4.600"/><circle cx="811.800" cy="534.500" r="1.300" fill="#595959"/>
<path d="M821 532.800 h2.200 M872.500 532.800 h2.800 M873.900 531.400 v2.800" stroke-width="0.700"/>
</g>
<path d="M826 532.800 h45" stroke="#dcdcdc" stroke-width="0.550"/><rect x="847.200" y="530.300" width="1.400" height="5" fill="#f4f4f4"/>
</svg>
<div class="a" style="left:0;top:459.0px;width:848px;height:16px;background:linear-gradient(90deg,#1d3846 0,#1d3846 20px,#3b3b3b 20px,#3b3b3b 173px,#15364a 173px,#123048 300px,#15283a 420px,#14243a 848px)"></div>
<div class="a" style="left:369.3px;top:459.0px;width:20px;height:16px;background:#3c4f62"></div>
<div class="a" style="left:370.5px;top:474.2px;width:17.500px;height:0.8px;background:#8cb4e0"></div>
<div class="t" style="left:39.0px;top:463.6px;color:#d6d6d6;font-size:6.500px">Aramak için buraya yazın</div>
<div class="t" style="left:690.5px;top:463.8px;color:#f0f0f0;font-size:6px">12°C&nbsp; Çok bulutlu</div>
<div class="t" style="left:803.7px;top:462.4px;color:#f0f0f0;font-size:4.800px">11:26</div>
<div class="t" style="left:800.3px;top:469.1px;color:#f0f0f0;font-size:4.800px">7.04.2022</div>
<svg class="a" style="left:0;top:459px" width="848" height="16" viewBox="49 538 848 16">
<!-- start -->
<g fill="#dfe9f2"><rect x="56.300" y="543.300" width="2.600" height="2.600"/><rect x="59.500" y="543.300" width="2.600" height="2.600"/><rect x="56.300" y="546.500" width="2.600" height="2.600"/><rect x="59.500" y="546.500" width="2.600" height="2.600"/></g>
<!-- search icon -->
<circle cx="80.300" cy="545" r="2.100" fill="none" stroke="#e0e0e0" stroke-width="0.700"/><path d="M78.800 546.600 L76.800 548.800" stroke="#e0e0e0" stroke-width="0.800"/>
<!-- cortana, task view -->
<circle cx="233.200" cy="546.300" r="2.800" fill="none" stroke="#f2f2f2" stroke-width="1"/>
<g fill="none" stroke="#f2f2f2" stroke-width="0.700"><rect x="251.800" y="544.300" width="4" height="4.200"/><path d="M250.300 544.800 v3.200 M257.300 544.800 v3.200 M252 543 h3.600"/></g>
<!-- edge -->
<circle cx="276.600" cy="546.300" r="4.300" fill="#2f8fd8"/><path d="M272.500 547 a4.200 4.200 0 0 1 8.300 -1.500 q-2 -2 -4.500 -0.800 q-2 1.200 -1 3.600 q1 1.800 3.300 1.800 q-3.500 1.600 -6.100 -3.100z" fill="#48d3a0"/><circle cx="277.300" cy="547" r="1.500" fill="#1b3544"/>
<!-- explorer -->
<path d="M293.800 543.300 h3.200 l0.800 0.900 h5 v6 h-9z" fill="#f3c84b"/><rect x="293.800" y="545.200" width="9" height="1.600" fill="#3f7fc4"/><rect x="296.300" y="547.600" width="4" height="1.300" fill="#6a5a2a"/>
<!-- chrome -->
<circle cx="320" cy="546.300" r="4.400" fill="#e8c33a"/><path d="M320 546.300 L316.200 544.100 A4.400 4.400 0 0 1 323.800 544.100Z" fill="#dc4a3c"/><path d="M320 546.300 L316.200 544.100 A4.400 4.400 0 0 0 320 550.700Z" fill="#3fa35a"/><circle cx="320" cy="546.300" r="2.100" fill="#f4f4f4"/><circle cx="320" cy="546.300" r="1.600" fill="#4a8ae0"/>
<!-- firefox -->
<circle cx="341.600" cy="546.500" r="4.300" fill="#f5932a"/><path d="M338 544 q3.500 -3.500 7 0.500 q1.500 3 -0.500 5.500 q1 -3 -2 -4 q-2.500 0 -4.500 -2z" fill="#e8432e"/><circle cx="341.800" cy="547" r="2" fill="#7a3ad0"/><path d="M339 548 q2.500 2 5 0 q-1 2.600 -3.600 2.200z" fill="#fbd43a"/>
<!-- store -->
<path d="M359.200 543.600 h8.200 v6.600 h-8.200z" fill="#f2f2f2"/><path d="M361.500 543.600 v-1.200 h3.600 v1.200" fill="none" stroke="#f2f2f2" stroke-width="0.700"/><rect x="361.300" y="545" width="1.800" height="1.800" fill="#e2574c"/><rect x="363.500" y="545" width="1.800" height="1.800" fill="#7cba4a"/><rect x="361.300" y="547.200" width="1.800" height="1.800" fill="#3f9ad8"/><rect x="363.500" y="547.200" width="1.800" height="1.800" fill="#f0b83a"/>
<!-- mail -->
<rect x="380.300" y="543.300" width="9.500" height="6.500" rx="0.600" fill="#2d8fe0"/><path d="M380.300 543.800 L385 547.300 L389.800 543.800" fill="none" stroke="#d8ecfa" stroke-width="0.800"/><path d="M380.300 543.300 h9.500 l-4.750 3.300z" fill="#9fd0f5"/>
<!-- snip -->
<ellipse cx="407.300" cy="547" rx="3.800" ry="3" fill="#d8d8d2"/><path d="M405 549.500 L411.300 542.200" stroke="#8a8f96" stroke-width="1.100"/><circle cx="410.300" cy="543.300" r="1.100" fill="#c8a04a"/><circle cx="405.800" cy="546.800" r="0.900" fill="#5a6a7a"/>
<!-- word -->
<rect x="429" y="542.500" width="5.200" height="7.600" fill="#eaf1fb"/><rect x="425.300" y="544" width="5" height="4.800" fill="#2b66c0"/><path d="M431.300 544.300 h2 M431.300 546.300 h2 M431.300 548.300 h2" stroke="#2b66c0" stroke-width="0.600"/><path d="M426.300 545.300 l0.700 2.400 l0.800 -2 l0.800 2 l0.700 -2.400" stroke="#fff" stroke-width="0.500" fill="none"/>
<!-- powerpoint -->
<rect x="449.800" y="542.500" width="5.200" height="7.600" fill="#f7c9b8"/><circle cx="452.600" cy="546.300" r="2.500" fill="#e86a3a"/><rect x="445.800" y="544" width="5" height="4.800" fill="#d4431f"/><path d="M447.600 547.800 v-2.800 h1.100 a0.850 0.850 0 0 1 0 1.700 h-1.100" stroke="#fff" stroke-width="0.550" fill="none"/>
<!-- weather -->
<circle cx="727.700" cy="544.300" r="2.100" fill="#f2b63c"/><path d="M726 549.600 a2.100 2.100 0 0 1 0.400 -4.150 a2.700 2.700 0 0 1 5.100 0.500 a1.850 1.850 0 0 1 0.300 3.650z" fill="#e8eef4"/>
<!-- tray -->
<g fill="none" stroke="#e8e8e8" stroke-width="0.700">
<path d="M795.300 547.300 L797.300 545.300 L799.300 547.300"/>
<circle cx="808" cy="545.500" r="1.700"/><path d="M805.600 549.300 h4.800"/>
<rect x="816.800" y="543" width="2.600" height="4.200" rx="1.300" fill="#e8e8e8"/><path d="M815.600 546.300 a2.500 2.500 0 0 0 5 0 M818.100 548.800 v1"/>
<rect x="825.600" y="543.700" width="4.600" height="3.300"/><path d="M831.500 545.500 v3.500 h-2.700 M826.800 549.300 h2.600"/>
<path d="M835.600 545.300 h1.400 l1.700 -1.600 v5.600 l-1.700 -1.600 h-1.400z" fill="#e8e8e8" stroke="none"/><path d="M839.800 544.800 q1.100 1.500 0 3 M840.900 543.800 q1.900 2.500 0 5"/>
<rect x="880.300" y="543.200" width="6" height="5" fill="#dfe6ee"/><path d="M881.500 544.800 h3.600 M881.500 546.300 h3.600" stroke="#5a6a7a" stroke-width="0.500"/><path d="M882 548.200 v1.600 l1.600 -1.600" />
</g>
</svg>

<div class="a" style="left:328.3px;top:436.0px;width:193px;height:19.500px;background:#292a2d;border-radius:1.500px"></div>
<div class="a" style="left:442.0px;top:438.3px;width:59px;height:14.500px;background:#8ab4f8;border-radius:1.500px"></div>
<div class="a" style="left:331.5px;top:443.3px;width:0.8px;height:4.500px;background:#ddd"></div><div class="a" style="left:333.6px;top:443.3px;width:0.8px;height:4.500px;background:#ddd"></div>
<div class="t" style="left:339.3px;top:443.4px;color:#e8e8e8;font-size:5.050px">teams.microsoft.com ekranınızı paylaşıyor.</div>
<div class="t" style="left:449.0px;top:443.3px;color:#202124;font-size:5.100px">Paylaşmayı durdur</div>
<div class="t" style="left:505.3px;top:443.3px;color:#9db4d6;font-size:5px">Gizle</div>
</div>
<div class="a" style="left:3px;top:535px;width:69px;height:15px;border-radius:3px;background:rgba(22,21,21,.88)"></div>
<div class="t" style="left:8px;top:538.5px;color:#fff;font-size:7px;letter-spacing:-0.22px;font-weight:bold">fazıl kırkbir (Konuk)</div>
</body></html>
